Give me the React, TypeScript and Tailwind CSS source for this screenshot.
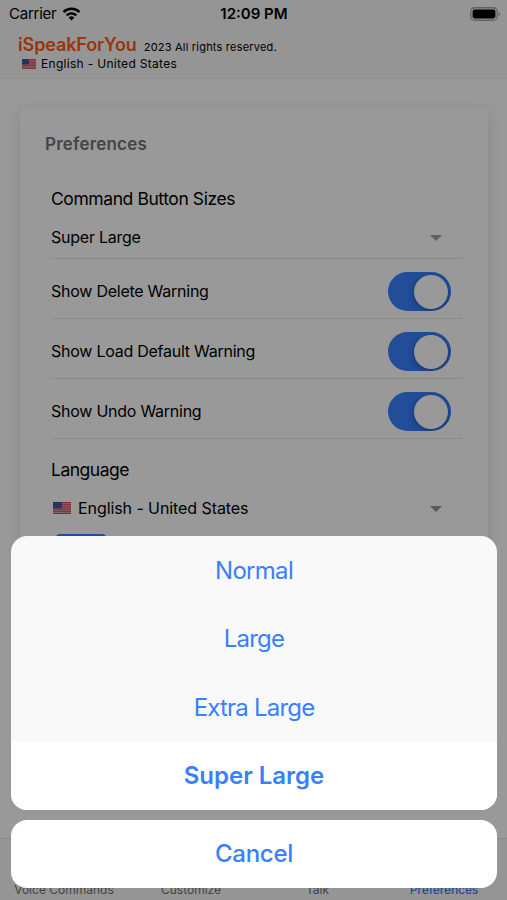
import { useState } from 'react';

const sizes = [
  { label: 'Normal', className: 'tracking-[-0.7px]' },
  { label: 'Large', className: 'tracking-[-0.75px]' },
  { label: 'Extra Large', className: 'tracking-[-0.8px]' },
  { label: 'Super Large', className: '' },
];

const tabs = [
  { label: 'Voice Commands', className: 'w-[128px]' },
  { label: 'Customize', className: 'w-[126px]' },
  { label: 'Talk', className: 'w-[127px]' },
  { label: 'Preferences', className: 'w-[126px] text-[#3880ff] font-medium tracking-[-0.1px]' },
];

function Flag({ className }: { className: string }) {
  return (
    <svg className={className} viewBox="0 0 18 13" preserveAspectRatio="none">
      <rect width="18" height="13" rx="1" fill="#e2b4ba" />
      {[0, 2, 4, 6, 8, 10, 12].map((y) => (
        <rect key={y} y={y} width="18" height="1" fill="#d8404f" />
      ))}
      <rect width="9" height="7" fill="#3c5296" />
      {[1.5, 3.5, 5.5].map((y) => (
        <path key={y} d={`M1 ${y}h7`} stroke="#8b9acb" strokeWidth="0.5" strokeDasharray="0.6 1" />
      ))}
    </svg>
  );
}

function WifiIcon() {
  return (
    <svg className="h-[14px] w-[19px]" viewBox="0 0 20 15" fill="none" stroke="#000" strokeWidth="2.6">
      <path d="M1.4 5.4a12.4 12.4 0 0 1 17.2 0" />
      <path d="M4.8 8.9a7.5 7.5 0 0 1 10.4 0" />
      <path d="M10 14.4 6.9 11.3a4.5 4.5 0 0 1 6.2 0z" fill="#000" stroke="none" />
    </svg>
  );
}

function BatteryIcon() {
  return (
    <svg className="h-[14px] w-[31px]" viewBox="0 0 31 14">
      <rect x="0.75" y="0.75" width="26.5" height="12.5" rx="3.8" fill="none" stroke="#a3a3a3" strokeWidth="1.3" />
      <rect x="2.6" y="2.6" width="22.8" height="8.8" rx="1.8" fill="#000" />
      <path d="M28.6 4.8c2 .8 2 3.6 0 4.4z" fill="#a3a3a3" />
    </svg>
  );
}

function Caret({ className }: { className: string }) {
  return (
    <svg className={`mt-[2px] mr-[21px] h-[6px] w-[12px] ${className}`} viewBox="0 0 12 6">
      <path d="M0 0h12L6 6z" fill="currentColor" />
    </svg>
  );
}

function ToggleRow({ label }: { label: string }) {
  const [on, setOn] = useState(true);

  return (
    <div className="flex h-[60px] items-center justify-between border-b border-[#e8e8e8] pt-[6px] pr-[12px]">
      <span className="-mt-[1px] text-[16px] tracking-[-0.25px]">{label}</span>
      <button
        onClick={() => setOn(!on)}
        className={`flex h-[39px] w-[63px] items-center overflow-hidden rounded-full px-[3px] ${on ? 'justify-end bg-[#3880ff]' : 'bg-gray-200'}`}
      >
        <span className="size-[34px] rounded-full bg-white shadow-[0_2px_7px_rgba(0,0,0,0.3)]" />
      </button>
    </div>
  );
}

export default function App() {
  const [selected, setSelected] = useState('Super Large');

  return (
    <div className="relative h-[900px] w-[507px] overflow-hidden bg-white font-['Inter',sans-serif] text-black">
      <div className="flex h-full flex-col">
        <header className="h-[79px] shrink-0 border-b border-[#ededed] bg-[#f8f8f8]">
          <div className="grid h-[28px] grid-cols-3 items-center pr-[6px] pl-[9px]">
            <div className="flex items-center gap-[6px] text-[15px] tracking-[-0.25px]">
              <span>Carrier</span>
              <WifiIcon />
            </div>
            <span className="-ml-[2px] text-center text-[15px] font-semibold">12:09 PM</span>
            <div className="-mt-[1px] flex justify-end">
              <BatteryIcon />
            </div>
          </div>
          <div className="flex h-[28px] items-baseline gap-[7px] pt-[3px] pl-[18px] leading-[27px]">
            <h1 className="text-[18px] font-semibold tracking-[-0.12px] text-[#ff5a14]">iSpeakForYou</h1>
            <span className="text-[11px] tracking-[0.2px]">2023 All rights reserved.</span>
          </div>
          <div className="flex items-center gap-[5px] pl-[22px] text-[12px] leading-[16px] tracking-[0.3px]">
            <Flag className="h-[10px] w-[14px]" />
            <span>English - United States</span>
          </div>
        </header>

        <main className="min-h-0 flex-1 overflow-hidden pt-[29px] pr-[19px] pl-[20px]">
          <section className="h-[690px] rounded-[5px] px-[25px] pt-[24px] shadow-[0_4px_16px_rgba(0,0,0,0.12)]">
            <h2 className="text-[17px] leading-[24px] font-semibold tracking-[0.2px] text-[#737373]">Preferences</h2>
            <div className="mt-[30px] ml-[6px]">
              <h3 className="text-[17.5px] leading-[26px] tracking-[-0.42px]">Command Button Sizes</h3>
              <div className="flex h-[47px] items-center justify-between border-b border-[#e8e8e8] pt-[4px]">
                <span className="text-[16px] tracking-[-0.24px]">{selected}</span>
                <Caret className="text-[#a3a3a3]" />
              </div>
              <ToggleRow label="Show Delete Warning" />
              <ToggleRow label="Show Load Default Warning" />
              <ToggleRow label="Show Undo Warning" />
              <h3 className="mt-[18px] text-[17.5px] leading-[26px] tracking-[-0.5px]">Language</h3>
              <div className="flex h-[47px] items-center justify-between pt-[3px]">
                <span className="flex items-center gap-[7px] pl-[2px] text-[16px] tracking-[-0.08px]">
                  <Flag className="h-[12px] w-[18px]" />
                  English - United States
                </span>
                <Caret className="text-[#969696]" />
              </div>
              <div className="mt-[4px] ml-[5px] h-[36px] w-[50px] rounded-[4px] bg-[#3880ff]" />
            </div>
          </section>
        </main>

        <nav className="flex h-[62px] shrink-0 items-end border-t border-[#e8e8e8] bg-[#f8f8f8] pb-[2px] text-center text-[12px] leading-[16px] text-[#737373]">
          {tabs.map((tab) => (
            <span key={tab.label} className={tab.className}>{tab.label}</span>
          ))}
        </nav>
      </div>

      <div className="absolute inset-0 flex flex-col justify-end gap-[10px] bg-black/40 pr-[10px] pb-[12px] pl-[11px] text-[24px] text-[#3880ff]">
        <div className="flex h-[274px] flex-col overflow-hidden rounded-[16px] bg-[#f9f9f9]">
          {sizes.map((size) => (
            <button
              key={size.label}
              onClick={() => setSelected(size.label)}
              className={`flex-1 pt-[1px] ${size.label === selected ? 'bg-white font-semibold' : ''} ${size.className}`}
            >
              {size.label}
            </button>
          ))}
        </div>
        <button className="h-[68px] rounded-[16px] bg-white font-medium tracking-[-0.3px]">Cancel</button>
      </div>
    </div>
  );
}
